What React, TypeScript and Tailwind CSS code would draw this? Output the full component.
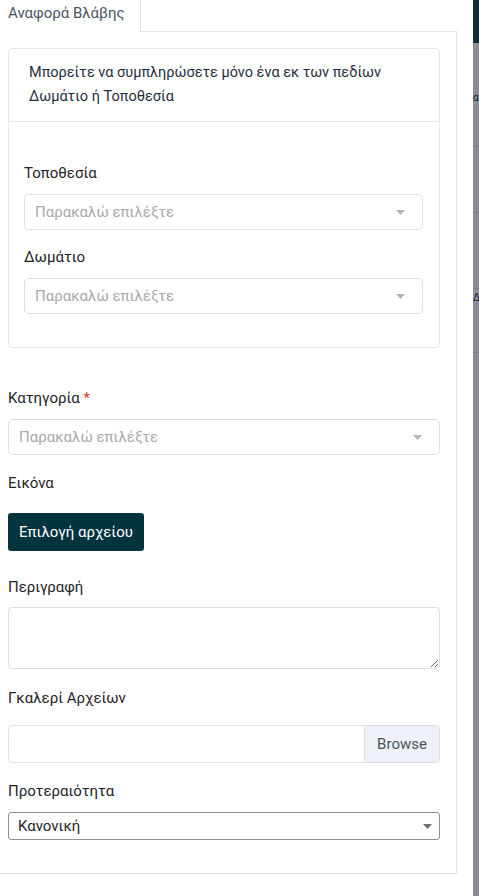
import React from "react";

const font = { fontFamily: "Roboto, 'Noto Sans', sans-serif" };

function Caret({ dark }: { dark?: boolean }) {
  return (
    <svg width="9" height="5" viewBox="0 0 9 5" className="shrink-0">
      <path d="M0 0h9L4.5 5z" fill={dark ? "#707070" : "#b4b4b4"} />
    </svg>
  );
}

function FancySelect() {
  return (
    <div className="h-9 border border-[#dcdfe4] rounded-[5px] flex items-center justify-between pl-[10px] pr-[17px]">
      <span className="text-[15px] text-[#a7a9ad]">Παρακαλώ επιλέξτε</span>
      <Caret />
    </div>
  );
}

function Label({ children }: { children: React.ReactNode }) {
  return <div className="text-[15px] leading-6 text-[#1f2329]">{children}</div>;
}

export default function App() {
  return (
    <div className="flex w-[479px] h-[896px] overflow-hidden bg-white" style={font}>
      <div className="w-[473px] shrink-0 bg-white">
        <div className="flex w-[457px] h-[32px]">
          <div className="w-[141px] border-r border-[#dfe2e8] pl-2 pt-[1px] text-[15px] leading-6 text-[#4b5563]">
            Αναφορά Βλάβης
          </div>
          <div className="flex-1 border-b border-[#dfe2e8]" />
        </div>
        <div className="w-[457px] border-r border-b border-[#dfe2e8] pl-2 pr-4 pt-4 pb-[33px]">
          <div className="border border-[#e3e6eb] rounded-[4px]">
            <div className="px-5 py-3 border-b border-[#e3e6eb] text-[14.5px] leading-6 text-[#1f2d3d]">
              Μπορείτε να συμπληρώσετε μόνο ένα εκ των πεδίων Δωμάτιο ή Τοποθεσία
            </div>
            <div className="pl-[15px] pr-4 pt-[39px] pb-[33px]">
              <Label>Τοποθεσία</Label>
              <div className="mt-[9px]">
                <FancySelect />
              </div>
              <div className="mt-[15px]">
                <Label>Δωμάτιο</Label>
              </div>
              <div className="mt-[9px]">
                <FancySelect />
              </div>
            </div>
          </div>

          <div className="mt-[38px]">
            <Label>
              Κατηγορία <span className="text-[#e3342f]">*</span>
            </Label>
          </div>
          <div className="mt-[9px]">
            <FancySelect />
          </div>

          <div className="mt-4">
            <Label>Εικόνα</Label>
          </div>
          <button className="mt-[18px] h-[38px] px-[11px] rounded-[3px] bg-[#04343f] text-white text-[15px]">
            Επιλογή αρχείου
          </button>

          <div className="mt-6">
            <Label>Περιγραφή</Label>
          </div>
          <textarea className="mt-2 block w-full h-[62px] border border-[#dcdfe4] rounded-[4px] outline-none" />

          <div className="mt-[17px]">
            <Label>Γκαλερί Αρχείων</Label>
          </div>
          <div className="mt-[15px] h-[38px] border border-[#dcdfe4] rounded-[4px] flex overflow-hidden">
            <div className="flex-1" />
            <div className="w-[75px] bg-[#eef1f7] border-l border-[#dcdfe4] flex items-center justify-center text-[15px] text-[#4b5563]">
              Browse
            </div>
          </div>

          <div className="mt-4">
            <Label>Προτεραιότητα</Label>
          </div>
          <div className="mt-[9px] h-[28px] border border-[#8f9196] rounded-[3px] flex items-center justify-between pl-[9px] pr-[7px]">
            <span className="text-[15px] text-[#1f2329]">Κανονική</span>
            <Caret dark />
          </div>
        </div>
      </div>
      <div className="flex-1 flex flex-col bg-[#8a8c96]">
        <div className="h-[43px] bg-[#0b2f3a]" />
        <div className="h-[46px]" />
        <div className="h-[18px] text-[10px] leading-[18px] text-[#1f2329] overflow-hidden">α</div>
        <div className="h-[40px] border-b border-[#7c7e88]" />
        <div className="h-[66px] border-b border-[#7c7e88]" />
        <div className="h-[76px] border-b border-[#7c7e88]" />
        <div className="h-[18px] text-[10px] leading-[18px] text-[#1f2329] overflow-hidden">Δ</div>
        <div className="h-[46px] border-b border-[#7c7e88]" />
      </div>
    </div>
  );
}
